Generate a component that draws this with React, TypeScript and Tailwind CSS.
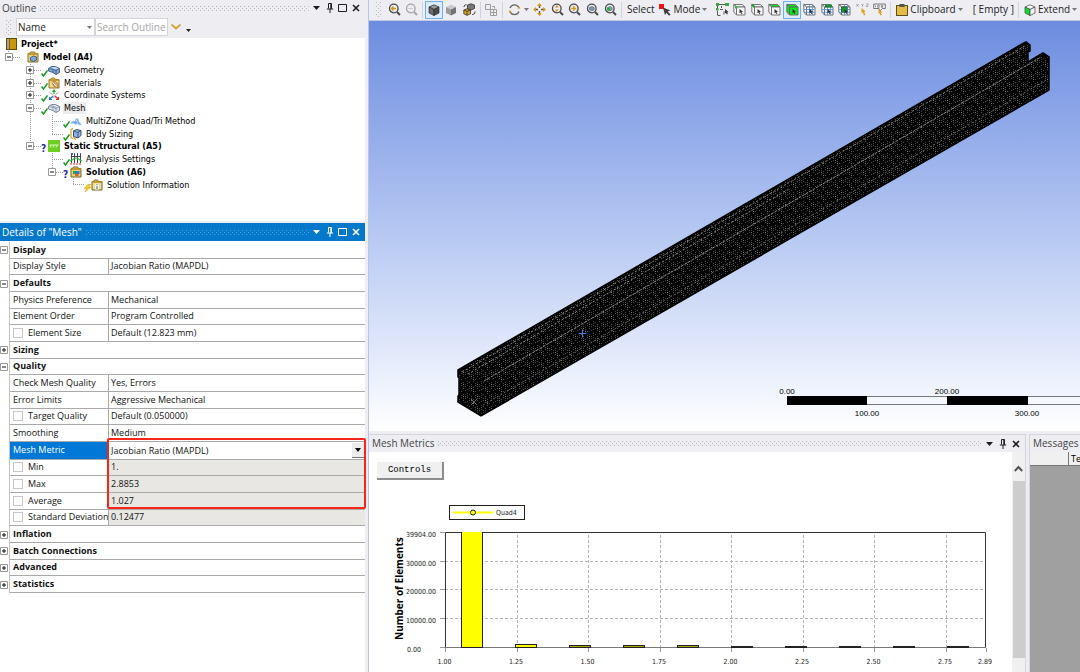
import { useId, type ReactNode } from "react";

const UI = "font-['Open_Sans','Noto_Sans',sans-serif]";
const TREE = "font-['DejaVu_Sans_Condensed','DejaVu_Sans',sans-serif]";

/* ---------- small shared parts ---------- */

function Grip({ color }: { color: string }) {
  const id = useId();
  return (
    <svg className="h-[5px] min-w-0 flex-1" aria-hidden="true">
      <pattern id={id} width="4" height="4" patternUnits="userSpaceOnUse">
        <rect x="0" y="0" width="1" height="1" fill={color} />
        <rect x="2" y="2" width="1" height="1" fill={color} />
      </pattern>
      <rect width="100%" height="5" fill={`url(#${id})`} />
    </svg>
  );
}

function SideGrip() {
  return (
    <svg className="h-[15px] w-[6px] shrink-0" viewBox="0 0 6 15" aria-hidden="true">
      {[0, 4, 8, 12].map((y) => (
        <g key={y} fill="#b9b9c0">
          <rect x="0" y={y} width="1" height="1" />
          <rect x="4" y={y} width="1" height="1" />
          <rect x="2" y={y + 2} width="1" height="1" />
        </g>
      ))}
    </svg>
  );
}

function Caret({ className = "" }: { className?: string }) {
  return (
    <svg className={`h-[3px] w-[5px] shrink-0 ${className}`} viewBox="0 0 5 3" fill="currentColor" aria-hidden="true">
      <path d="M0 0h5L2.5 3z" />
    </svg>
  );
}

function WindowButtons({ maximize = true }: { maximize?: boolean }) {
  return (
    <div className="flex shrink-0 items-center">
      <button aria-label="Options" className="flex h-4 w-[13px] items-center justify-center">
        <svg width="7" height="4" viewBox="0 0 7 4" fill="currentColor"><path d="M0 0h7L3.5 4z" /></svg>
      </button>
      <button aria-label="Pin" className="flex h-4 w-[13px] items-center justify-center">
        <svg width="8" height="10" viewBox="0 0 8 10" fill="none" stroke="currentColor">
          <path d="M2.5 .5h3v5M2.5 .5v5M.8 6h6.4M4 6v4" />
          <path d="M5 1v5" strokeWidth="1.4" />
        </svg>
      </button>
      {maximize && (
        <button aria-label="Maximize" className="flex h-4 w-[13px] items-center justify-center">
          <svg width="9" height="8" viewBox="0 0 9 8" fill="none" stroke="currentColor">
            <path d="M.5 .5h8v7h-8z" />
          </svg>
        </button>
      )}
      <button aria-label="Close" className="flex h-4 w-[13px] items-center justify-center">
        <svg width="8" height="8" viewBox="0 0 8 8" stroke="currentColor" strokeWidth="1.6">
          <path d="M1 1l6 6M7 1L1 7" />
        </svg>
      </button>
    </div>
  );
}

function ExpandBox({ open, name }: { open: boolean; name: string }) {
  return (
    <button aria-label={`Toggle ${name}`} className="block size-[8px] shrink-0">
      <svg className="block" width="8" height="8" viewBox="0 0 8 8" fill="none">
        <path d="M.5 .5h7v7h-7z" fill="#fff" stroke="#999" />
        <path d="M2 4h4" stroke="#111" />
        {!open && <path d="M4 2v4" stroke="#111" />}
      </svg>
    </button>
  );
}

/* ---------- outline tree ---------- */

const treeIcons: Record<string, ReactNode> = {
  project: (
    <>
      <rect x=".5" y=".5" width="10" height="11" fill="#c9960c" stroke="#5f4a10" />
      <rect x="1" y="1" width="2.5" height="10" fill="#aaa38c" />
      <path d="M3.5 1v10" stroke="#6d5511" strokeWidth=".7" />
    </>
  ),
  model: (
    <>
      <path d="M1 11V2.5h1.5L3.5 1h4l1 1.5H11V11z" fill="#e6cf86" stroke="#8a6c1b" />
      <path d="M1 3h10" stroke="#b78a15" strokeWidth="1.5" />
      <path d="M3.5 6.5 6.5 5l3 1v3l-3 1.5-3-1z" fill="#7ea6dc" stroke="#2f4c74" strokeWidth=".8" />
    </>
  ),
  geometry: (
    <>
      <path d="M.5 4.5 3.5 2.5h4l4 2v4l-3.5 2L5 8.5.5 7z" fill="#7da7dd" stroke="#3e5878" strokeWidth=".9" />
      <path d="M3.5 3h4l3 1.5L8 5.5 5 4.5z" fill="#c4daf3" />
      <path d="M.5 4.5 5 5.5l3 1 3.5-2M5 5.5v3M8 6.5v4" stroke="#3e5878" strokeWidth=".8" />
    </>
  ),
  materials: (
    <>
      <path d="M1 11V2.5h1.5L3.5 1h3l1 1.5H11V11z" fill="#efd88c" stroke="#94741d" />
      <path d="M1 3h10" stroke="#b78a15" strokeWidth="1.5" />
      <path d="M4 5l3-1 3 3v3.5l-4-1z" fill="#e9a36d" stroke="#a36d34" strokeWidth=".7" />
      <path d="M4.5 5.5l4 4" stroke="#fff" strokeWidth=".9" />
    </>
  ),
  coords: (
    <>
      <path d="M6 5V1.5M4.5 2.8 6 1l1.5 1.8" stroke="#22b033" strokeWidth="1.2" />
      <path d="M5 7 2 10M1.5 8v2.5H4" stroke="#2469d8" strokeWidth="1.2" />
      <path d="M7 7l3 3M10.5 8v2.5H8" stroke="#e02b20" strokeWidth="1.2" />
      <path d="M1.5 3.5l3 2M10.5 3.5l-3 2M6 6v3" stroke="#888" strokeWidth=".8" />
    </>
  ),
  mesh: (
    <>
      <path d="M.5 4.5 3.5 2.5h4l4 2v4l-3.5 2L5 8.5.5 7z" fill="#dbe4ee" stroke="#66788c" strokeWidth=".9" />
      <path d="M.5 4.5 5 5.5l3 1 3.5-2M5 5.5v3M8 6.5v4M2.5 3.5l6 2" stroke="#66788c" strokeWidth=".6" />
    </>
  ),
  multizone: (
    <>
      <path d="M.5 8.5 3 6l2 .5 1-3 2 .5 1 3 2.5 2.5-2 .5-1.5-1.5-3 1-1-1.5z" fill="#6fa4ee" stroke="#a8c8f4" strokeWidth=".7" />
      <path d="M6 4.5l1.5 3" stroke="#fff" strokeWidth=".7" />
    </>
  ),
  sizing: (
    <>
      <path d="M1 1v9M1 1.5 3 .5M1 10h3l2 1.5" stroke="#d6a01d" strokeWidth="1.2" />
      <path d="M3.5 3 6.5 1.5 11 2.5v5L8 10 3.5 8.5z" fill="#8eb4e6" stroke="#2d435f" strokeWidth=".9" />
      <path d="M3.5 3 8 4.5 11 2.5M8 4.5V10" stroke="#2d435f" strokeWidth=".8" />
    </>
  ),
  structural: (
    <>
      <rect width="12" height="12" fill="#6fce22" />
      <path d="M1.5 5h9M3.5 5l-1.5 2.5M6.5 5 5 7.5M9.5 5 8 7.5" stroke="#e9fadb" strokeWidth=".9" />
    </>
  ),
  settings: (
    <>
      <path d="M1.5 1v9M4.5 1v9M7.5 1v9M10.5 1v9M1 3.5h10" stroke="#333" strokeWidth=".9" />
      <path d="M1 1h2M4 1h1M7 1h1M10 1h1" stroke="#2233dd" strokeWidth="1.5" />
      <path d="M0 8c2 0 3-3 6-3s4 3 6 3" stroke="#24c23b" strokeWidth="1.2" />
      <path d="M0 11h12" stroke="#e02b20" strokeDasharray="2 1" />
    </>
  ),
  solution: (
    <>
      <path d="M1 11V2.5h1.5L3.5 1h4l1 1.5H11V11z" fill="#e6cf86" stroke="#7b6120" />
      <path d="M1 3h10" stroke="#b78a15" strokeWidth="1.5" />
      <rect x="3" y="5" width="3" height="3" fill="#26a53a" />
      <rect x="6" y="5" width="3.5" height="3" fill="#3c74d3" />
      <rect x="5" y="8" width="3.5" height="2" fill="#e0641f" />
    </>
  ),
  info: (
    <>
      <path d="M1 11V2.5h1.5L3.5 1h3l1 1.5H11V11z" fill="#f0dd95" stroke="#7b6120" />
      <path d="M1 3h10" stroke="#b78a15" strokeWidth="1.5" />
      <rect x="4" y="4.5" width="4" height="6" fill="#f8f4de" />
      <path d="M6 5v1M6 7v3" stroke="#5c83bd" strokeWidth="1.2" />
    </>
  ),
};

function Status({ kind }: { kind?: string }) {
  if (kind === "question") return <span className="w-[7px] translate-y-[3px] text-[10px] font-bold text-[#1c2b9c]">?</span>;
  return (
    <svg className="w-[7px] shrink-0 translate-y-[3px]" height="8" viewBox="0 0 7 8" fill="none" aria-hidden="true">
      {kind === "check" && <path d="M.5 4.5 2.5 7 6.5 1.5" stroke="#159c1f" strokeWidth="1.5" />}
      {kind === "bolt" && <path d="M4.5 0 0 4.5h2.5L1 8l6-5H4.5L7 0z" fill="#f5c816" stroke="#c79b0c" strokeWidth=".4" />}
    </svg>
  );
}

type Node = { name: string; icon: string; level: number; open?: boolean; status?: string; bold?: boolean; selected?: boolean };

const nodes: Node[] = [
  { name: "Model (A4)", icon: "model", level: 0, open: true, bold: true },
  { name: "Geometry", icon: "geometry", level: 1, open: false, status: "check" },
  { name: "Materials", icon: "materials", level: 1, open: false, status: "check" },
  { name: "Coordinate Systems", icon: "coords", level: 1, open: false, status: "check" },
  { name: "Mesh", icon: "mesh", level: 1, open: true, status: "check", selected: true },
  { name: "MultiZone Quad/Tri Method", icon: "multizone", level: 2, status: "check" },
  { name: "Body Sizing", icon: "sizing", level: 2, status: "check" },
  { name: "Static Structural (A5)", icon: "structural", level: 1, open: true, status: "question", bold: true },
  { name: "Analysis Settings", icon: "settings", level: 2, status: "check" },
  { name: "Solution (A6)", icon: "solution", level: 2, open: true, status: "question", bold: true },
  { name: "Solution Information", icon: "info", level: 3, status: "bolt" },
];

const indents = ["pl-[5px]", "pl-[26px]", "pl-[48px]", "pl-[69px]"];

function TreeIcon({ name }: { name: string }) {
  return (
    <svg className="shrink-0" width="12" height="12" viewBox="0 0 12 12" fill="none" aria-hidden="true">
      {treeIcons[name]}
    </svg>
  );
}

function Outline() {
  return (
    <section className={`flex h-[221px] flex-col ${UI}`}>
      <header className="flex h-[16px] items-center pl-[2px] text-[10px] text-[#444]">
        <h2 className="mr-1">Outline</h2>
        <Grip color="#b4b4bb" />
        <div className="pr-[3px] pl-px text-[#1e1e1e]"><WindowButtons /></div>
      </header>
      <div className="flex h-[22px] items-center pl-[6px] text-[10px]">
        <SideGrip />
        <div className="relative ml-1">
          <select aria-label="Search by" className="block h-[18px] w-[79px] appearance-none border border-[#d5d5dc] bg-white px-px text-[#222]">
            <option>Name</option>
          </select>
          <Caret className="pointer-events-none absolute top-[8px] right-[3px] text-[#777]" />
        </div>
        <input
          aria-label="Search Outline"
          placeholder="Search Outline"
          className="block h-[18px] w-[73px] border border-[#d5d5dc] bg-white pl-px placeholder:text-[#a5a5a5]"
        />
        <button aria-label="Expand search" className="ml-[3px]">
          <svg width="10" height="6" viewBox="0 0 10 6" fill="none"><path d="M.5 .5 5 4.5 9.5 .5" stroke="#d3a12a" strokeWidth="1.7" /></svg>
        </button>
        <Caret className="mt-[7px] ml-[5px] text-[#222]" />
      </div>
      <div className="flex-1 bg-white">
        <div className={`relative flex h-[153px] flex-col text-[9px] leading-[12px] text-black ${TREE}`}>
          <svg className="absolute top-0 left-0" width="100" height="153" fill="none" stroke="#9a9a9a" strokeDasharray="1 1" aria-hidden="true">
            <path d="M8.5 13v7M9 19.5h12M30.5 26v83M30 32.5h11M30 45.5h11M30 57.5h11M30 70.5h11M30 108.5h11" />
            <path d="M52.5 77v19M52 83.5h11M52 96.5h11M52.5 115v20M52 121.5h11M52 134.5h11M73.5 141v6M73 146.5h11" />
          </svg>
          <div className="relative flex flex-1 items-center pl-[6px] font-bold">
            <TreeIcon name="project" />
            <span className="ml-[3px]">Project*</span>
          </div>
          {nodes.map((n) => (
            <div key={n.name} className={`relative flex flex-1 items-center ${indents[n.level]}`}>
              <div className="w-[15px] shrink-0">{n.open !== undefined && <ExpandBox open={n.open} name={n.name} />}</div>
              <Status kind={n.status} />
              <TreeIcon name={n.icon} />
              <span className={`ml-[3px] px-px whitespace-nowrap ${n.bold ? "font-bold" : ""} ${n.selected ? "bg-[#ececec]" : ""}`}>{n.name}</span>
            </div>
          ))}
        </div>
      </div>
    </section>
  );
}

/* ---------- details table ---------- */

type Row = { label: string; value?: string; group?: boolean; open?: boolean; check?: boolean; readOnly?: boolean; active?: boolean };

const rows: Row[] = [
  { label: "Display", group: true, open: true },
  { label: "Display Style", value: "Jacobian Ratio (MAPDL)" },
  { label: "Defaults", group: true, open: true },
  { label: "Physics Preference", value: "Mechanical" },
  { label: "Element Order", value: "Program Controlled" },
  { label: "Element Size", value: "Default (12.823 mm)", check: true },
  { label: "Sizing", group: true, open: false },
  { label: "Quality", group: true, open: true },
  { label: "Check Mesh Quality", value: "Yes, Errors" },
  { label: "Error Limits", value: "Aggressive Mechanical" },
  { label: "Target Quality", value: "Default (0.050000)", check: true },
  { label: "Smoothing", value: "Medium" },
  { label: "Mesh Metric", value: "Jacobian Ratio (MAPDL)", active: true },
  { label: "Min", value: "1.", check: true, readOnly: true },
  { label: "Max", value: "2.8853", check: true, readOnly: true },
  { label: "Average", value: "1.027", check: true, readOnly: true },
  { label: "Standard Deviation", value: "0.12477", check: true, readOnly: true },
  { label: "Inflation", group: true, open: false },
  { label: "Batch Connections", group: true, open: false },
  { label: "Advanced", group: true, open: false },
  { label: "Statistics", group: true, open: false },
];

function DetailRow({ row }: { row: Row }) {
  const line = "border-b border-[#a9a9a9]";
  return (
    <tr>
      <td className="border-r border-[#c4c4c4] p-0">
        {row.group && <ExpandBox open={!!row.open} name={row.label} />}
      </td>
      {row.group ? (
        <th colSpan={2} scope="rowgroup" className={`p-0 pl-[3px] text-left font-bold ${line}`}>{row.label}</th>
      ) : (
        <>
          <th
            scope="row"
            className={`overflow-hidden border-r p-0 pl-[3px] text-left font-normal whitespace-nowrap ${line} ${row.active ? "bg-[#0078d7] text-white" : ""}`}
          >
            {row.check ? (
              <label className="flex items-center gap-[5px]">
                <input type="checkbox" className="size-[10px] shrink-0 appearance-none border border-[#c8c8c8] bg-white" />
                {row.label}
              </label>
            ) : (
              row.label
            )}
          </th>
          <td className={`p-0 pl-[2px] ${line} ${row.readOnly ? "bg-[#e8e7e3]" : ""}`}>
            {row.active ? (
              <div className="relative">
                <select aria-label={row.label} className="block h-[15px] w-full appearance-none bg-white leading-[15px]">
                  <option>{row.value}</option>
                </select>
                <span className="pointer-events-none absolute top-0 right-0 flex h-[15px] w-[13px] items-center justify-center border-r border-b border-[#777] bg-[#ececec]">
                  <svg width="6" height="4" viewBox="0 0 6 4"><path d="M0 0h6L3 4z" /></svg>
                </span>
              </div>
            ) : (
              row.value
            )}
          </td>
        </>
      )}
    </tr>
  );
}

function Details() {
  return (
    <section className={`flex flex-1 flex-col bg-white ${UI}`}>
      <header className="flex h-[18px] items-center bg-[#0479cc] pl-[2px] text-[10px] text-white">
        <h2 className="mr-1">Details of "Mesh"</h2>
        <Grip color="#4fa5e2" />
        <div className="pr-[3px] pl-px"><WindowButtons /></div>
      </header>
      <div className="relative pt-px">
        <table className="h-[351px] w-full table-fixed border-separate border-spacing-0 text-[9px] leading-[14px] text-[#111]">
          <colgroup>
            <col className="w-[10px]" />
            <col className="w-[99px]" />
            <col />
          </colgroup>
          <tbody>
            {rows.map((r) => <DetailRow key={r.label} row={r} />)}
          </tbody>
        </table>
        {/* highlight around the active metric and its results */}
        <div className="pointer-events-none absolute -right-px top-[197px] left-[107px] h-[71px] rounded-xs border-2 border-[#f8251b]" />
      </div>
    </section>
  );
}

/* ---------- toolbar ---------- */

function Magnifier({ children, color = "#4a4a4a" }: { children?: ReactNode; color?: string }) {
  return (
    <svg width="13" height="13" viewBox="0 0 13 13" fill="none">
      <circle cx="5.8" cy="5.5" r="4.3" stroke={color} strokeWidth="1.3" />
      <path d="M9 9l3 3" stroke={color} strokeWidth="1.9" />
      {children}
    </svg>
  );
}

function Cube({ top, left, right, stroke = "#444" }: { top: string; left: string; right: string; stroke?: string }) {
  return (
    <svg width="12" height="12" viewBox="0 0 12 12" stroke={stroke} strokeWidth=".7" strokeLinejoin="round">
      <path d="M1 3 6 .8 11 3 6 5.5z" fill={top} />
      <path d="M1 3l5 2.5v6L1 9z" fill={left} />
      <path d="M11 3 6 5.5v6L11 9z" fill={right} />
    </svg>
  );
}

/* wire box with a cursor, used by all the selection filters */
function FilterBox({ front = "#f7f7f7", top = "#f7f7f7", grid = false, mark }: { front?: string; top?: string; grid?: boolean; mark?: ReactNode }) {
  return (
    <svg width="13" height="13" viewBox="0 0 13 13" fill="none" stroke="#666" strokeWidth=".9">
      <path d="M.8 1.5h8.500l2.700 2.500H3.500z" fill={top} />
      <path d="M.8 1.5 3.5 4v8L.8 9z" fill={front} />
      <path d="M3.5 4H12v8H3.500z" fill={front} />
      {grid && <path d="M6.5 1.5v10.500M9.500 1.500v10.500M1 6.500h11M1 9.300h11" stroke="#5b93dd" />}
      {mark}
      <path d="M6.500 6l3.500 2.700-1.500.3.800 1.700-.9.400-.8-1.700-1.100.900z" fill="#333" stroke="none" />
    </svg>
  );
}

function Separator() {
  return <div className="mx-[2px] h-4 w-px shrink-0 bg-[#d0d2dc]" />;
}

function Tool({ label, active, children }: { label: string; active?: boolean; children: ReactNode }) {
  return (
    <button
      aria-label={label}
      className={`flex h-[18px] items-center justify-center border ${active ? "border-[#6eb1ec] bg-[#dcecfa]" : "border-transparent"}`}
    >
      {children}
    </button>
  );
}

function Toolbar() {
  return (
    <div className={`flex h-[21px] shrink-0 items-center overflow-hidden border-b border-[#c3cbe2] pb-px pl-[7px] text-[10px] whitespace-nowrap text-[#222] ${UI}`}>
      <SideGrip />
      <div className="ml-1 grid w-[34px] shrink-0 grid-cols-2">
        <Tool label="Zoom back"><Magnifier><path d="M8 5.5H3.5M5.5 3.5l-2 2 2 2" stroke="#d69a12" strokeWidth="1.3" /></Magnifier></Tool>
        <Tool label="Zoom forward"><Magnifier color="#a5a5a5"><path d="M3.5 5.5H8" stroke="#c9c9c9" /></Magnifier></Tool>
      </div>
      <Separator />
      <div className="grid w-[53px] shrink-0 grid-cols-3">
        <Tool label="Shaded with edges" active><Cube top="#9a9a9a" left="#6a6a6a" right="#4a4a4a" stroke="#2b2b2b" /></Tool>
        <Tool label="Shaded"><Cube top="#c9c9c9" left="#9b9b9b" right="#737373" stroke="none" /></Tool>
        <Tool label="Switch view">
          <svg width="13" height="13" viewBox="0 0 13 13" fill="none">
            <path d="M4.5 2 8 .8l3.5 1.2v3.5L8 7 4.5 5.500z" fill="#777" stroke="#333" strokeWidth=".8" />
            <path d="M.8 7 4 5.8 7.5 7v3.800L4 12.300.8 10.800z" fill="#d9a520" stroke="#333" strokeWidth=".8" />
            <path d="M.8 7 4 8.300 7.500 7M4 8.300v4" stroke="#333" strokeWidth=".8" />
            <path d="M1 4c0-1.500 1-2.300 2.500-2.300M12 8.500c0 2-1 3-2.800 3" stroke="#333" />
          </svg>
        </Tool>
      </div>
      <Separator />
      <div className="grid w-[17px] shrink-0">
        <Tool label="Convert">
          <svg width="13" height="13" viewBox="0 0 13 13" fill="none" stroke="#9c9c9c">
            <path d="M.5 1.5h5v5h-5zM7 3.5h2.5v2M5.5 6.500h6v6h-6zM5.500 9.500h6M8.500 6.500v6" />
          </svg>
        </Tool>
      </div>
      <Separator />
      <div className="ml-px grid w-[17px] shrink-0">
        <Tool label="Rotate">
          <svg width="13" height="13" viewBox="0 0 13 13" fill="none" strokeWidth="1.3">
            <path d="M2 5a4.800 4.800 0 0 1 9 0M11 8.500a4.800 4.800 0 0 1-9 0" stroke="#6a6a6a" />
            <path d="M9.500 5.500h3L11 3.300zM.5 7.800h3L2 10z" fill="#d69a12" />
          </svg>
        </Tool>
      </div>
      <Caret className="ml-px text-[#777]" />
      <div className="ml-[2px] grid w-[88px] shrink-0 grid-cols-5">
        <Tool label="Pan">
          <svg width="13" height="13" viewBox="0 0 13 13">
            <path d="M6.5 0 9 3H4zM6.500 13 4 10h5zM0 6.500 3 4v5zM13 6.500 10 9V4z" fill="#d69a12" />
            <path d="M5.800 3h1.400v2H5.800zM5.800 8h1.400v2H5.800zM3 5.800h2v1.400H3zM8 5.800h2v1.400H8z" fill="#555" />
          </svg>
        </Tool>
        <Tool label="Zoom"><Magnifier><path d="M5.8 2 7.8 4.5h-4zM5.8 9l2-2.500h-4z" fill="#d69a12" /></Magnifier></Tool>
        <Tool label="Box zoom"><Magnifier><path d="M5.8 3v5M3.3 5.5h5" stroke="#d69a12" strokeWidth="1.5" /></Magnifier></Tool>
        <Tool label="Zoom to fit"><Magnifier><path d="M3.5 4.5l2.300-1 2.300 1v2.300l-2.300 1-2.300-1z" fill="#7d97b4" stroke="#506780" strokeWidth=".7" /></Magnifier></Tool>
        <Tool label="Zoom to selection"><Magnifier><path d="M3.5 4.5l2.300-1 2.300 1v2.300l-2.300 1-2.300-1z" fill="#8fa3b8" stroke="#506780" strokeWidth=".7" /><rect x="3.3" y="4.8" width="2.8" height="2.8" fill="#22b233" /></Magnifier></Tool>
      </div>
      <Separator />
      <span className="ml-[3px]">Select</span>
      <button className="ml-1 flex items-center">
        <svg width="13" height="12" viewBox="0 0 13 12">
          <rect width="5" height="5" fill="#f01313" />
          <path d="M4 3.500l7.500 3-2.800 1 2.800 3-1.400 1.300-2.800-3-1.300 2.500z" fill="#3d3d3d" />
        </svg>
        <span className="ml-[2px]">Mode</span>
        <Caret className="ml-[2px] text-[#777]" />
      </button>
      <div className="ml-[6px] grid w-[175px] shrink-0 grid-cols-10">
        <Tool label="Smart select">
          <svg width="13" height="13" viewBox="0 0 13 13" fill="none">
            <path d="M3 1.500h6M1.500 3v3M1.500 8v4M4 6.500h3M1.500 12.500h3M5.500 3v2M8 8.500v3" stroke="#555" />
            <path d="M0 0h3v3H0zM9 0h4v3H9zM0 5h2.500v2.500H0z" fill="#37a744" />
            <path d="M9 6l3.500 3-1.300.4.700 1.600-1 .4-.8-1.600-1.100.8z" fill="#333" />
          </svg>
        </Tool>
        <Tool label="Vertex"><FilterBox mark={<rect x="2" y="3" width="2.5" height="2.5" fill="#38b34a" stroke="none" />} /></Tool>
        <Tool label="Edge"><FilterBox mark={<path d="M.8 1.5 3.5 4" stroke="#12a328" strokeWidth="2" />} /></Tool>
        <Tool label="Face"><FilterBox top="#0ee026" /></Tool>
        <Tool label="Body" active><FilterBox front="#0be41f" top="#0be41f" /></Tool>
        <Tool label="Node"><FilterBox grid /></Tool>
        <Tool label="Element face"><FilterBox grid mark={<path d="M4 1.5h7v3H4z" fill="#1b8d36" stroke="none" />} /></Tool>
        <Tool label="Element"><FilterBox grid mark={<path d="M3.5 4H9v5H3.500z" fill="#1b9d36" stroke="#17663a" />} /></Tool>
        <Tool label="Coordinates">
          <svg width="13" height="13" viewBox="0 0 13 13" fill="none">
            <path d="M.5 1l2 2.500M2.500 1l-2 2.500M5.500 1l1 1.300 1-1.300M6.500 2.300v1.400M10.300 1h2l-2 2.500h2" stroke="#888" strokeWidth=".7" />
            <path d="M5.500 5l4.300 3.500-1.700.2 1.300 3.300-1.500.5-1.100-3.200-1.300.9z" fill="#dba21b" />
          </svg>
        </Tool>
        <Tool label="Probe">
          <svg width="13" height="13" viewBox="0 0 13 13" fill="none">
            <path d="M.7 1h11.600v4.500H9.500L7.500 7.500 6 5.500H.7z" fill="#f8f8f8" stroke="#555" strokeWidth=".8" />
            <path d="M2.500 2.300v2M4.700 2.300h1.500v2H4.700zM8.300 2.300h1.500v2H8.300z" stroke="#666" strokeWidth=".7" />
            <path d="M5.500 6l4 3.200-1.600.3 1 2.500-1.400.5-1-2.500-1 .8z" fill="#dba21b" />
          </svg>
        </Tool>
      </div>
      <Separator />
      <button className="ml-[3px] flex items-center">
        <svg width="12" height="12" viewBox="0 0 12 12">
          <rect x=".5" y="1.5" width="11" height="10" fill="#e5bb43" stroke="#5c4d22" />
          <rect x="3.5" y="0" width="5" height="3" fill="#555" />
        </svg>
        <span className="ml-[2px]">Clipboard</span>
        <Caret className="ml-[2px] text-[#777]" />
      </button>
      <span className="ml-[10px]">[ Empty ]</span>
      <div className="ml-[2px]"><Separator /></div>
      <button className="ml-[3px] flex items-center">
        <Cube top="#f8f8f8" left="#0ee026" right="#f2f2f2" />
        <span className="ml-[2px]">Extend</span>
        <Caret className="ml-[2px] text-[#777]" />
      </button>
    </div>
  );
}

/* ---------- 3D viewport ---------- */

const BEAM = "M89 349 653 23l4-2 4 3v6l-2 1v10l15-9 6 4v33L112 395l-23-14v-6l1-1v-17l-1-1z";

function Viewport() {
  return (
    <div className="relative min-h-0 flex-1 bg-gradient-to-b from-[#6d8cdf] to-white">
      <svg className="absolute inset-0 size-full" viewBox="0 0 711 410" preserveAspectRatio="xMaxYMax slice" role="img" aria-label="Meshed beam">
        <defs>
          <pattern id="elements" width="14" height="12" patternUnits="userSpaceOnUse">
            <path
              d="M0 0h1v1H0zM0 2h1v1H0zM0 4h1v1H0zM0 8h1v1H0zM2 1h1v1H2zM2 5h1v1H2zM2 7h1v1H2zM4 3h1v1H4zM4 5h1v1H4zM4 9h1v1H4zM6 0h1v1H6zM6 6h1v1H6zM6 8h1v1H6zM8 2h1v1H8zM8 4h1v1H8zM8 10h1v1H8zM10 1h1v1h-1zM10 5h1v1h-1zM10 7h1v1h-1zM12 3h1v1h-1zM12 5h1v1h-1zM12 9h1v1h-1z"
              fill="#484848"
            />
            <path d="M4 7h1v1H4zM10 3h1v1h-1zM6 10h1v1H6z" fill="#757575" />
          </pattern>
        </defs>
        <path d={BEAM} fill="#050505" />
        <path d={BEAM} fill="url(#elements)" />
        <path d={BEAM} stroke="#000" strokeWidth="1.5" fill="none" />
        <g stroke="#a5a5a5" strokeDasharray="2 2" strokeWidth=".8" fill="none">
          <path d="M93 351 656 25M99 353 420 168" />
          <path d="M115 360 672 36" strokeDasharray="3 1" />
        </g>
        <path d="M114 384 679 58" stroke="#777" strokeDasharray="2 2" strokeWidth=".8" />
        <path d="M102 378l6 6M108 378l-6 6" stroke="#999" strokeWidth=".7" />
        <path d="M209.500 312.500h8M213.500 308.500v8" stroke="#4d7ce0" />
        <rect x="418" y="376" width="293" height="7" fill="#f4f7fe" />
        <path d="M418 375.500h293M418 383.500h293" stroke="#777" />
        <path d="M418 375h80v9h-80zM578 375h81v9h-81z" />
        <g fontSize="8" textAnchor="middle" className="font-['Liberation_Sans',sans-serif]">
          <text x="418" y="373">0.00</text>
          <text x="578" y="373">200.00</text>
          <text x="498" y="395">100.00</text>
          <text x="658" y="395">300.00</text>
        </g>
      </svg>
    </div>
  );
}

/* ---------- mesh metrics ---------- */

const xTicks = [1, 1.25, 1.5, 1.75, 2, 2.25, 2.5, 2.75, 2.89];
const yTicks = [39904, 30000, 20000, 10000, 0];
const counts = [39904, 1000, 600, 590, 580, 60, 50, 40, 40, 30];

const px = (v: number) => 75.5 + (v - 1) * 286;
const py = (v: number) => Math.round(195 - (v / 39904) * 115) - 0.5;

function barFill(count: number) {
  if (count >= 1000) return "#ff0";
  return count > 500 ? "#a8a800" : "#000";
}

function Chart() {
  return (
    <svg className="block w-full" viewBox="-1 -1 643 220" role="img" aria-label="Number of elements by Jacobian ratio">
      <g stroke="#b5b5b5" strokeDasharray="3 2">
        {xTicks.slice(1, -1).map((v) => <path key={v} d={`M${Math.floor(px(v)) + 0.5} 82V195`} />)}
        {yTicks.slice(1, -1).map((v) => <path key={v} d={`M75 ${py(v)}H616`} />)}
      </g>
      <g stroke="#999">
        {xTicks.map((v) => <path key={v} d={`M${Math.floor(px(v)) + 0.5} 195v4`} />)}
        {yTicks.map((v) => <path key={v} d={`M70 ${py(v)}h5`} />)}
      </g>
      <path d="M75.5 195V79.5H615.5V195" fill="none" stroke="#333" />
      <path d="M75 194.5H616" stroke="#777" />
      {counts.map((c, i) => {
        const h = Math.max(1, Math.round((c / 39904) * 115));
        return <rect key={i} x={91.5 + i * 54} y={194.5 - h} width="21" height={h} fill={barFill(c)} stroke="#222" />;
      })}
      <path d="M92 80h20" stroke="#ff0" strokeWidth="2" />
      <g fontSize="7" fill="#222" className="font-['DejaVu_Sans_Condensed','DejaVu_Sans',sans-serif]">
        {yTicks.map((v) => <text key={v} x={v ? 66 : 51} y={py(v) + 4} textAnchor="end">{v.toFixed(2)}</text>)}
        {xTicks.map((v) => <text key={v} x={px(v) - 1} y="211" textAnchor="middle">{v.toFixed(2)}</text>)}
        <rect x="79.5" y="52.5" width="75" height="14" fill="#fff" stroke="#222" />
        <path d="M83 59.5h40" stroke="#ff0" strokeWidth="2" />
        <circle cx="103" cy="59.5" r="2.5" fill="#ff0" stroke="#222" />
        <text x="126" y="62">Quad4</text>
      </g>
      <text transform="translate(33 187) rotate(-90)" fontSize="10" fontWeight="700" className="font-['Open_Sans',sans-serif]">Number of Elements</text>
    </svg>
  );
}

function MeshMetrics() {
  return (
    <section className="flex min-w-0 flex-1 flex-col border-t border-r border-[#d4d6df]">
      <header className={`flex h-[17px] shrink-0 items-center pl-[3px] text-[10px] text-[#444] ${UI}`}>
        <h2 className="mr-1">Mesh Metrics</h2>
        <Grip color="#b4b4bb" />
        <div className="pr-[3px] pl-px text-[#1e1e1e]"><WindowButtons maximize={false} /></div>
      </header>
      <div className="flex min-h-0 flex-1">
        <div className="relative min-w-0 flex-1 overflow-hidden bg-white">
          <Chart />
          <button className="absolute top-[10px] left-[8px] h-[18px] w-[67px] border-r-2 border-b-2 border-[#8c8c8c] bg-[#f0f0f0] pt-[2px] font-['Liberation_Mono',monospace] text-[9px] text-black">
            Controls
          </button>
        </div>
        <div className="flex w-[13px] shrink-0 flex-col items-center bg-[#f0f0f0] pt-[13px]">
          <svg className="shrink-0" width="9" height="7" viewBox="0 0 9 7" fill="none"><path d="M.8 6 4.5 2 8.2 6" stroke="#555" strokeWidth="2" /></svg>
          <div className="mt-[9px] mb-[14px] w-[12px] flex-1 bg-[#cdcdcd]" />
        </div>
      </div>
    </section>
  );
}

function Messages() {
  return (
    <section className={`flex w-[51px] shrink-0 flex-col overflow-hidden border-t border-l border-[#d4d6df] whitespace-nowrap ${UI}`}>
      <h2 className="flex h-[17px] shrink-0 items-center pl-[3px] text-[10px] text-[#444]">Messages</h2>
      <div className="flex h-[14px] shrink-0 border-b border-[#777] bg-[#f0f0f0] text-[9px]">
        <div className="w-[39px] shrink-0 border-r border-[#777]" />
        <div className="pl-[2px]">Text</div>
      </div>
      <div className="flex-1 bg-[#a0a0a0]" />
    </section>
  );
}

export default function App() {
  return (
    <div className="flex h-screen min-h-[620px] overflow-hidden bg-[#eeeef2]">
      <aside className="flex w-[365px] shrink-0 flex-col gap-[2px]">
        <Outline />
        <Details />
      </aside>
      <main className="ml-[3px] flex min-w-0 flex-1 flex-col border-l border-[#b9c4e6]">
        <Toolbar />
        <Viewport />
        <div className="mt-[3px] flex h-[238px] shrink-0 gap-[3px]">
          <MeshMetrics />
          <Messages />
        </div>
      </main>
    </div>
  );
}
